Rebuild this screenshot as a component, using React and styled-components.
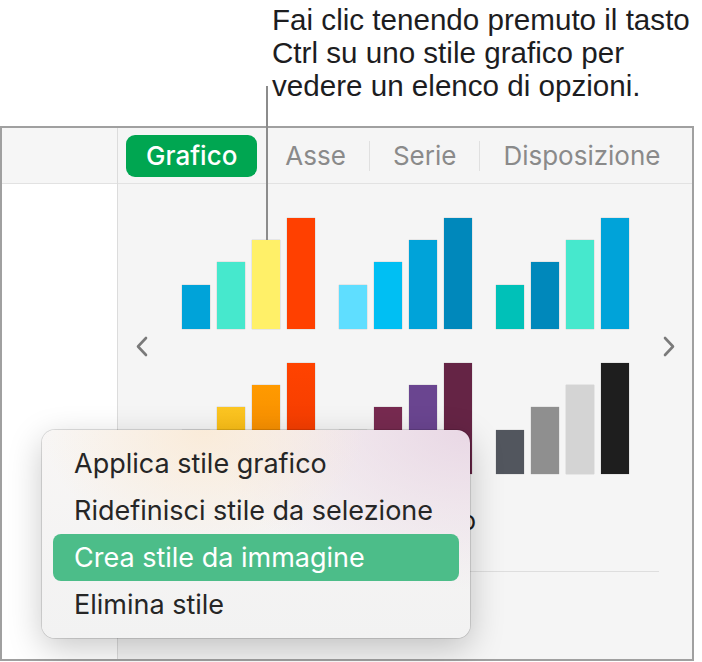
import React from "react";
import styled, { createGlobalStyle } from "styled-components";

const GlobalStyle = createGlobalStyle`
  html, body {
    margin: 0;
    padding: 0;
    background: #ffffff;
  }
  body {
    font-family: Inter, "Liberation Sans", sans-serif;
    -webkit-font-smoothing: antialiased;
  }
`;

const Page = styled.div`
  position: relative;
  width: 702px;
  height: 662px;
  overflow: hidden;
`;

const Callout = styled.div`
  height: 126px;
  box-sizing: border-box;
  padding: 3px 0 0 272px;
  font-family: "Liberation Sans", Arial, sans-serif;
  font-size: 29.6px;
  line-height: 33px;
  color: #1d1d1f;
`;

const Leader = styled.div`
  position: absolute;
  left: 266px;
  top: 86px;
  width: 2px;
  height: 154px;
  background: #8c8c8c;
  z-index: 2;
`;

const Window = styled.div`
  box-sizing: border-box;
  width: 694px;
  height: 535px;
  border: 2px solid #a0a0a0;
  display: grid;
  grid-template-columns: 116px 1fr;
  background: #f5f5f5;
`;

const Sidebar = styled.div`
  display: flex;
  flex-direction: column;
  border-right: 1px solid #dcdcdc;
`;

const SidebarHead = styled.div`
  height: 55px;
  background: #f6f6f6;
  border-bottom: 1px solid #e2e2e2;
`;

const SidebarBody = styled.div`
  flex: 1;
  background: #ffffff;
`;

const Panel = styled.div`
  display: flex;
  flex-direction: column;
  min-width: 0;
`;

const TabBar = styled.div`
  height: 55px;
  display: flex;
  align-items: center;
  padding-left: 8px;
  border-bottom: 1px solid #e2e2e2;
`;

const Tab = styled.div`
  height: 42px;
  display: flex;
  align-items: center;
  padding: 0 ${({ $active }) => ($active ? "20px" : "23px")};
  margin-right: ${({ $active }) => ($active ? "5px" : "0")};
  border-radius: 9px;
  background: ${({ $active }) => ($active ? "#00a651" : "transparent")};
  color: ${({ $active }) => ($active ? "#ffffff" : "#8a8a8a")};
  font-size: 26px;
  font-weight: ${({ $active }) => ($active ? 500 : 400)};
`;

const TabSep = styled.div`
  width: 1px;
  height: 30px;
  background: #e0e0e0;
`;

const StylesArea = styled.div`
  display: flex;
  align-items: center;
  justify-content: space-between;
  padding: 34px 16px 0 17px;
`;

const Chevron = styled.svg`
  width: 13px;
  height: 21px;
  flex: none;
`;

const StyleGrid = styled.div`
  display: grid;
  grid-template-columns: repeat(3, 133px);
  column-gap: 24px;
  row-gap: 34px;
`;

const ChartThumb = styled.div`
  height: 111px;
  display: flex;
  align-items: flex-end;
  gap: 7px;
`;

const Bar = styled.div`
  width: 28px;
  background: ${({ $color }) => $color};
  box-shadow: 0 0 1px rgba(0, 0, 0, 0.35);
`;

const Caption = styled.div`
  margin-top: 32px;
  height: 30px;
  display: flex;
  justify-content: flex-end;
  padding-right: 216px;
  font-size: 26px;
  line-height: 30px;
  color: #1e1e1e;
`;

const Rule = styled.div`
  margin: 35px 33px 0 33px;
  height: 1px;
  background: #dedede;
`;

const Menu = styled.div`
  position: absolute;
  left: 42px;
  top: 430px;
  width: 428px;
  height: 208px;
  box-sizing: border-box;
  padding: 10px 11px 8px 11px;
  border-radius: 13px;
  background:
    radial-gradient(ellipse 160px 120px at 38% 0%, rgba(250, 234, 214, 0.9), rgba(250, 234, 214, 0) 100%),
    radial-gradient(ellipse 260px 160px at 100% 0%, rgba(232, 214, 228, 0.95), rgba(232, 214, 228, 0) 100%),
    linear-gradient(180deg, #f8f6f5 0%, #f2f2f2 100%);
  box-shadow: 0 0 0 1px rgba(0, 0, 0, 0.12), 0 10px 34px rgba(0, 0, 0, 0.22);
  z-index: 3;
`;

const MenuItem = styled.div`
  height: 47px;
  display: flex;
  align-items: center;
  padding-left: 21px;
  border-radius: 8px;
  background: ${({ $selected }) => ($selected ? "#4cbd89" : "transparent")};
  color: ${({ $selected }) => ($selected ? "#ffffff" : "#262626")};
  font-size: 27px;
`;

const charts = [
  ["#00a3d9", "#46e8cd", "#fff068", "#ff4000"],
  ["#5fdeff", "#00bff3", "#00a3d9", "#0088bb"],
  ["#00c1b8", "#0088bb", "#46e8cd", "#00a3d9"],
  [
    "linear-gradient(#ffe34d, #f7c800)",
    "linear-gradient(#fcc623, #f5ad00)",
    "linear-gradient(#ff9a00, #f08500)",
    "linear-gradient(#ff4300, #ee3a00)",
  ],
  ["#7a2a52", "#772a50", "#6a4590", "#652445"],
  ["#52565e", "#8f8f8f", "#d4d4d4", "#1e1e1e"],
];

const heights = [44, 67, 89, 111];

const menuItems = [
  "Applica stile grafico",
  "Ridefinisci stile da selezione",
  "Crea stile da immagine",
  "Elimina stile",
];

const LeftArrow = () => (
  <Chevron viewBox="0 0 13 21">
    <path d="M11 2 L3 10.5 L11 19" fill="none" stroke="#7a7a7a" strokeWidth="2.6" strokeLinecap="round" strokeLinejoin="round" />
  </Chevron>
);

const RightArrow = () => (
  <Chevron viewBox="0 0 13 21">
    <path d="M2 2 L10 10.5 L2 19" fill="none" stroke="#7a7a7a" strokeWidth="2.6" strokeLinecap="round" strokeLinejoin="round" />
  </Chevron>
);

const App = () => (
  <Page>
    <GlobalStyle />
    <Callout>
      Fai clic tenendo premuto il tasto
      <br />
      Ctrl su uno stile grafico per
      <br />
      vedere un elenco di opzioni.
    </Callout>
    <Leader />
    <Window>
      <Sidebar>
        <SidebarHead />
        <SidebarBody />
      </Sidebar>
      <Panel>
        <TabBar>
          <Tab $active>Grafico</Tab>
          <Tab>Asse</Tab>
          <TabSep />
          <Tab>Serie</Tab>
          <TabSep />
          <Tab>Disposizione</Tab>
        </TabBar>
        <StylesArea>
          <LeftArrow />
          <StyleGrid>
            {charts.map((colors, i) => (
              <ChartThumb key={i}>
                {colors.map((c, j) => (
                  <Bar key={j} $color={c} style={{ height: heights[j] }} />
                ))}
              </ChartThumb>
            ))}
          </StyleGrid>
          <RightArrow />
        </StylesArea>
        <Caption>Titolo</Caption>
        <Rule />
      </Panel>
    </Window>
    <Menu>
      {menuItems.map((label) => (
        <MenuItem key={label} $selected={label === "Crea stile da immagine"}>
          {label}
        </MenuItem>
      ))}
    </Menu>
  </Page>
);

export default App;
